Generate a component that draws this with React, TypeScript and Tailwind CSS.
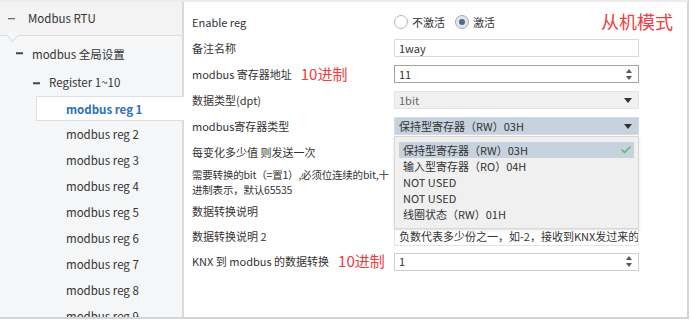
import { Check } from 'lucide-react';

const font = { fontFamily: '"Noto Sans CJK SC", "Noto Sans", sans-serif' };

function Minus({ left }: { left: number }) {
  return (
    <span
      className="absolute top-1/2 h-[1.5px] w-[7px] -translate-y-1/2 bg-[#444]"
      style={{ left }}
    />
  );
}

function Caret() {
  return (
    <svg width="8" height="5" viewBox="0 0 8 5" className="shrink-0">
      <path d="M0 0h8L4 5z" fill="#333" />
    </svg>
  );
}

function Spinner() {
  return (
    <svg width="6" height="11" viewBox="0 0 6 11" className="shrink-0">
      <path d="M0 4h6L3 0z" fill="#555" />
      <path d="M0 7h6L3 11z" fill="#555" />
    </svg>
  );
}

const regs = [2, 3, 4, 5, 6, 7, 8, 9];

export default function App() {
  return (
    <div className="h-[322px] w-[692px] overflow-hidden bg-white text-[11px] text-[#333]" style={font}>
      <div className="flex h-[319px] w-[689px] border-r-2 border-b-2 border-t-2 border-[#d4d4d4] border-t-[#ececec]">
        {/* tree */}
        <aside className="flex w-[184px] shrink-0 flex-col overflow-hidden whitespace-nowrap bg-[#f5f6f8] text-[11.5px]">
          <div className="relative flex h-[34px] shrink-0 items-center border-b border-[#dcdcdc] border-r-2 border-r-[#dadada] bg-[#f3f3f3] pl-[28px]">
            <Minus left={8} />
            <span>Modbus RTU</span>
            <span className="absolute -bottom-[5px] left-[8px] h-[9px] w-[9px] rotate-45 border-b border-r border-[#dcdcdc] bg-[#f5f6f8]" />
          </div>
          <div className="flex flex-col border-r-2 border-[#dadada]">
            <div className="relative flex h-[34px] items-center pl-[32px] pt-[4px]">
              <Minus left={16} />
              <span>modbus 全局设置</span>
            </div>
            <div className="relative flex h-[26px] items-center pl-[49px]">
              <Minus left={33} />
              <span>Register 1~10</span>
            </div>
          </div>
          <div className="ml-[36px] flex h-[25px] shrink-0 items-center border border-r-0 border-[#dedede] bg-white pl-[29px] pt-[2px] font-bold text-[#2a72b8]">
            modbus reg 1
          </div>
          <div className="flex flex-1 flex-col border-r-2 border-[#dadada]">
            {regs.map((n) => (
              <div key={n} className="flex h-[26px] shrink-0 items-center pl-[66px] pt-[2px]">
                modbus reg {n}
              </div>
            ))}
          </div>
        </aside>

        {/* form */}
        <main className="relative flex-1 whitespace-nowrap pl-[8px] pt-[7px]">
          <div className="absolute right-[14px] top-[6px] text-[18px] text-[#f03c3c]">从机模式</div>

          <div className="flex h-[26px] items-center">
            <span className="w-[202px]">Enable reg</span>
            <div className="flex items-center">
              <span className="h-[14px] w-[14px] rounded-full border border-[#b5b5b5] bg-white" />
              <span className="ml-[4px]">不激活</span>
              <span className="ml-[10px] flex h-[14px] w-[14px] items-center justify-center rounded-full border border-[#a9a9a9] bg-[#e6e6e6]">
                <span className="h-[6px] w-[6px] rounded-full bg-[#476b92]" />
              </span>
              <span className="ml-[4px]">激活</span>
            </div>
          </div>

          <div className="flex h-[26px] items-center">
            <span className="w-[202px]">备注名称</span>
            <div className="flex h-[18px] w-[245px] items-center border border-[#d9d9d9] bg-white px-[4px]">1way</div>
          </div>

          <div className="flex h-[26px] items-center">
            <span className="flex w-[202px] items-center">
              modbus 寄存器地址<span className="ml-[9px] text-[15px] text-[#f03c3c]">10进制</span>
            </span>
            <div className="flex h-[18px] w-[245px] items-center justify-between border border-[#a3a3a3] bg-white pl-[4px] pr-[6px]">
              <span>11</span>
              <Spinner />
            </div>
          </div>

          <div className="flex h-[26px] items-center">
            <span className="w-[202px]">数据类型(dpt)</span>
            <div className="flex h-[18px] w-[245px] items-center justify-between border border-[#e4e4e4] bg-[#f0f0f0] pl-[4px] pr-[6px] text-[#666]">
              <span>1bit</span>
              <Caret />
            </div>
          </div>

          <div className="flex h-[26px] items-center">
            <span className="w-[202px]">modbus寄存器类型</span>
            <div className="flex h-[18px] w-[245px] items-center justify-between border border-[#d2dbe4] bg-[#c6d2de] pl-[4px] pr-[6px]">
              <span>保持型寄存器（RW）03H</span>
              <Caret />
            </div>
          </div>

          <div className="flex h-[26px] items-center">
            <span className="w-[202px]">每变化多少值 则发送一次</span>
          </div>

          <div className="flex h-[34px] items-center">
            <span className="w-[196px] text-[10.5px] leading-[15px] tracking-[-0.2px]">
              需要转换的bit（=置1）,必须位连续的bit,十
              <br />
              进制表示，默认65535
            </span>
          </div>

          <div className="flex h-[25px] items-center">
            <span className="w-[202px]">数据转换说明</span>
          </div>

          <div className="flex h-[25px] items-center">
            <span className="w-[202px]">数据转换说明 2</span>
            <div className="flex h-[18px] w-[245px] items-center overflow-hidden border border-[#e4e4e4] bg-white px-[4px]">
              负数代表多少份之一，如-2，接收到KNX发过来的值是
            </div>
          </div>

          <div className="flex h-[25px] items-center">
            <span className="flex w-[202px] items-center">
              KNX 到 modbus 的数据转换<span className="ml-[9px] text-[15px] text-[#f03c3c]">10进制</span>
            </span>
            <div className="flex h-[18px] w-[245px] items-center justify-between border border-[#cfcfcf] bg-white pl-[4px] pr-[6px]">
              <span>1</span>
              <Spinner />
            </div>
          </div>

          {/* open dropdown */}
          <div className="absolute left-[210px] top-[134px] w-[245px] border border-[#d8d8d8] bg-[#f0f0f0] px-[4px] pb-[6px] pt-[5px] shadow-sm">
            <div className="flex h-[16px] items-center justify-between bg-[#c6d2de] pl-[4px] pr-[2px]">
              <span>保持型寄存器（RW）03H</span>
              <Check size={12} strokeWidth={3} className="text-[#5cb85c]" />
            </div>
            <div className="flex h-[16px] items-center pl-[4px]">输入型寄存器（RO）04H</div>
            <div className="flex h-[16px] items-center pl-[4px]">NOT USED</div>
            <div className="flex h-[16px] items-center pl-[4px]">NOT USED</div>
            <div className="flex h-[16px] items-center pl-[4px]">线圈状态（RW）01H</div>
          </div>
        </main>
      </div>
    </div>
  );
}
